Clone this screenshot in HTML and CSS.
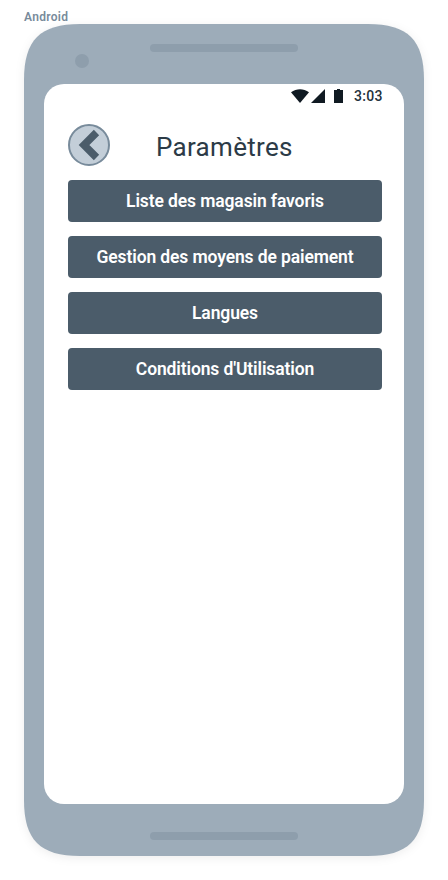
FILE: index.html
```html
<!DOCTYPE html>
<html lang="fr">
<head>
<meta charset="utf-8">
<title>Paramètres</title>
<link rel="stylesheet" href="styles.css">
</head>
<body>
<div class="label">Android</div>
<div class="phone">
  <svg class="frame" viewBox="0 0 400 832" aria-hidden="true">
    <path d="M56 0H344C384 0 400 16 400 56V776C400 816 384 832 344 832H56C16 832 0 816 0 776V56C0 16 16 0 56 0Z" fill="#9dacb9"/>
    <circle cx="58" cy="37" r="7" fill="#8e9eac"/>
    <rect x="126" y="20" width="148" height="8" rx="4" fill="#8e9eac"/>
    <rect x="126" y="808" width="148" height="8" rx="4" fill="#8e9eac"/>
  </svg>
  <main class="screen">
    <div class="status">
      <svg width="54" height="16" viewBox="0 0 54 16" fill="#101a22" aria-hidden="true">
        <path d="M0 4.200C5.500 .2 12.500 .2 18 4.200L9 15Z"/>
        <path d="M34 1V15H20Z"/>
        <path d="M43 2H46V1H49V2H52V15H43Z"/>
      </svg>
      <span class="time">3:03</span>
    </div>
    <header class="header">
      <button class="back" aria-label="Retour">
        <svg width="42" height="42" viewBox="0 0 42 42" aria-hidden="true">
          <circle cx="21" cy="21" r="20" fill="#c3ced8" stroke="#788b9b" stroke-width="2"/>
          <path d="M28.500 8.500L16 21L28.500 33.500" fill="none" stroke="#4b5c6a" stroke-width="7.500"/>
        </svg>
      </button>
      <h1 class="title">Paramètres</h1>
    </header>
    <nav class="menu">
      <button class="item">Liste des magasin favoris</button>
      <button class="item">Gestion des moyens de paiement</button>
      <button class="item">Langues</button>
      <button class="item">Conditions d'Utilisation</button>
    </nav>
  </main>
</div>
</body>
</html>
```
FILE: styles.css
```css
* { box-sizing: border-box; }
body {
  margin: 0;
  height: 880px;
  overflow: hidden;
  padding: 0 24px;
  background: #fff;
  font-family: Roboto, "Liberation Sans", sans-serif;
}
.label {
  height: 24px;
  padding-top: 9px;
  font-size: 12px;
  line-height: 16px;
  font-weight: 600;
  letter-spacing: .3px;
  color: #788b9b;
}
.phone {
  position: relative;
  width: 400px;
  height: 832px;
  padding: 60px 20px 52px;
}
.frame {
  position: absolute;
  inset: 0;
  width: 400px;
  height: 832px;
  overflow: visible;
  filter: drop-shadow(0 2px 5px rgba(0, 0, 0, .07));
}
.screen {
  position: relative;
  height: 720px;
  padding: 0 22px 0 24px;
  border-radius: 20px;
  background: #fff;
}
.status {
  display: flex;
  justify-content: flex-end;
  height: 40px;
  padding-top: 4px;
}
.time {
  width: 28px;
  margin-left: 9px;
  font-size: 14px;
  line-height: 17px;
  font-weight: 500;
  letter-spacing: .3px;
  color: #24323d;
  white-space: nowrap;
}
.header { display: flex; height: 56px; }
.back {
  width: 42px;
  height: 42px;
  padding: 0;
  border: 0;
  background: none;
}
.back svg { display: block; }
.title {
  margin: 6px 0 0 46px;
  font-size: 26px;
  line-height: 35px;
  font-weight: 400;
  letter-spacing: .3px;
  color: #2c3b47;
}
.menu { display: flex; flex-direction: column; gap: 14px; }
.item {
  height: 42px;
  padding: 0;
  border: 0;
  border-radius: 4px;
  background: #4b5c6a;
  color: #fff;
  font: 600 17.5px/42px Roboto, "Liberation Sans", sans-serif;
  letter-spacing: -.12px;
  white-space: nowrap;
}
```
